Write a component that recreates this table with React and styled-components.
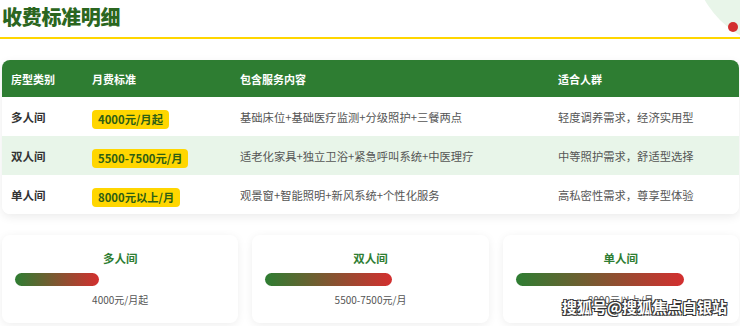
import React from 'react'
import styled, { createGlobalStyle } from 'styled-components'

const GlobalStyle = createGlobalStyle`
  html, body {
    margin: 0;
    padding: 0;
    background: #ffffff;
    font-family: "Noto Sans CJK SC", "Noto Sans", sans-serif;
  }
`

const rows = [
  {
    type: '多人间',
    price: '4000元/月起',
    services: '基础床位+基础医疗监测+分级照护+三餐两点',
    crowd: '轻度调养需求，经济实用型',
    level: 40,
  },
  {
    type: '双人间',
    price: '5500-7500元/月',
    services: '适老化家具+独立卫浴+紧急呼叫系统+中医理疗',
    crowd: '中等照护需求，舒适型选择',
    level: 60,
  },
  {
    type: '单人间',
    price: '8000元以上/月',
    services: '观景窗+智能照明+新风系统+个性化服务',
    crowd: '高私密性需求，尊享型体验',
    level: 80,
  },
]

const App = () => {
  return (
    <Page>
      <GlobalStyle />
      <Decor />
      <Dot />
      <Heading>
        <h1>收费标准明细</h1>
      </Heading>

      <Table>
        <HeadRow>
          <span>房型类别</span>
          <span>月费标准</span>
          <span>包含服务内容</span>
          <span>适合人群</span>
        </HeadRow>
        {rows.map((row, i) => (
          <Row key={row.type} $alt={i % 2 === 1}>
            <TypeCell>{row.type}</TypeCell>
            <div>
              <Badge>{row.price}</Badge>
            </div>
            <TextCell>{row.services}</TextCell>
            <TextCell>{row.crowd}</TextCell>
          </Row>
        ))}
      </Table>

      <Cards>
        {rows.map(row => (
          <Card key={row.type}>
            <h3>{row.type}</h3>
            <Track>
              <Bar style={{ width: `${row.level}%` }} />
            </Track>
            <p>{row.price}</p>
          </Card>
        ))}
      </Cards>

      <Watermark>搜狐号@搜狐焦点白银站</Watermark>
    </Page>
  )
}

const Page = styled.div`
  position: relative;
  width: 740px;
  height: 326px;
  overflow: hidden;
  box-sizing: border-box;
  padding: 0 1px 0 2px;
`

const Decor = styled.div`
  position: absolute;
  top: -137px;
  right: -137px;
  width: 184px;
  height: 184px;
  border-radius: 50%;
  background: #e8f5e9;
`

const Dot = styled.div`
  position: absolute;
  top: 22px;
  left: 728px;
  width: 10px;
  height: 10px;
  border-radius: 50%;
  background: #d32f2f;
`

const Heading = styled.div`
  position: relative;
  margin: 0 -1px 0 -2px;
  height: 37px;
  border-bottom: 2px solid #ffd600;
  h1 {
    margin: 0;
    padding: 2px 0 0 2px;
    font-size: 20px;
    line-height: 30px;
    font-weight: 900;
    color: #2b6620;
    letter-spacing: -0.3px;
  }
`

const Table = styled.div`
  position: relative;
  margin-top: 21px;
  border-radius: 8px;
  overflow: hidden;
  background: #ffffff;
  box-shadow: 0 3px 10px rgba(0, 0, 0, 0.08);
`

const grid = `
  display: grid;
  grid-template-columns: 81px 148px 318px 1fr;
  align-items: center;
  > * {
    padding-left: 9px;
  }
`

const HeadRow = styled.div`
  ${grid}
  height: 37px;
  background: #2e7d32;
  color: #ffffff;
  font-size: 11px;
  font-weight: 700;
`

const Row = styled.div`
  ${grid}
  height: 39px;
  background: ${p => (p.$alt ? '#e8f5e9' : '#ffffff')};
`

const TypeCell = styled.span`
  font-size: 11.5px;
  font-weight: 700;
  color: #333333;
`

const TextCell = styled.span`
  font-size: 11.3px;
  color: #555555;
`

const Badge = styled.span`
  display: inline-block;
  padding: 1px 6px;
  border-radius: 4px;
  background: #ffd600;
  color: #2e5e14;
  font-size: 11.3px;
  font-weight: 700;
  line-height: 17px;
`

const Cards = styled.div`
  display: grid;
  grid-template-columns: repeat(3, 1fr);
  gap: 14px;
  margin-top: 21px;
`

const Card = styled.div`
  background: #ffffff;
  border-radius: 8px;
  padding: 15px 13px;
  box-shadow: 0 2px 10px rgba(0, 0, 0, 0.07);
  text-align: center;
  h3 {
    margin: 0;
    font-size: 11.5px;
    line-height: 16px;
    font-weight: 700;
    color: #2e7d32;
  }
  p {
    margin: 6px 0 0;
    font-size: 10px;
    line-height: 16px;
    color: #555555;
  }
`

const Track = styled.div`
  margin-top: 7px;
  height: 13px;
`

const Bar = styled.div`
  height: 100%;
  border-radius: 7px;
  background: linear-gradient(90deg, #2e7d32, #d32f2f);
`

const Watermark = styled.div`
  position: absolute;
  left: 562px;
  top: 296px;
  font-size: 15px;
  line-height: 22px;
  font-weight: 700;
  color: #ffffff;
  text-shadow: -1px -1px 0 #333, 1px -1px 0 #333, -1px 1px 0 #333,
    1px 1px 0 #333;
`

export default App
